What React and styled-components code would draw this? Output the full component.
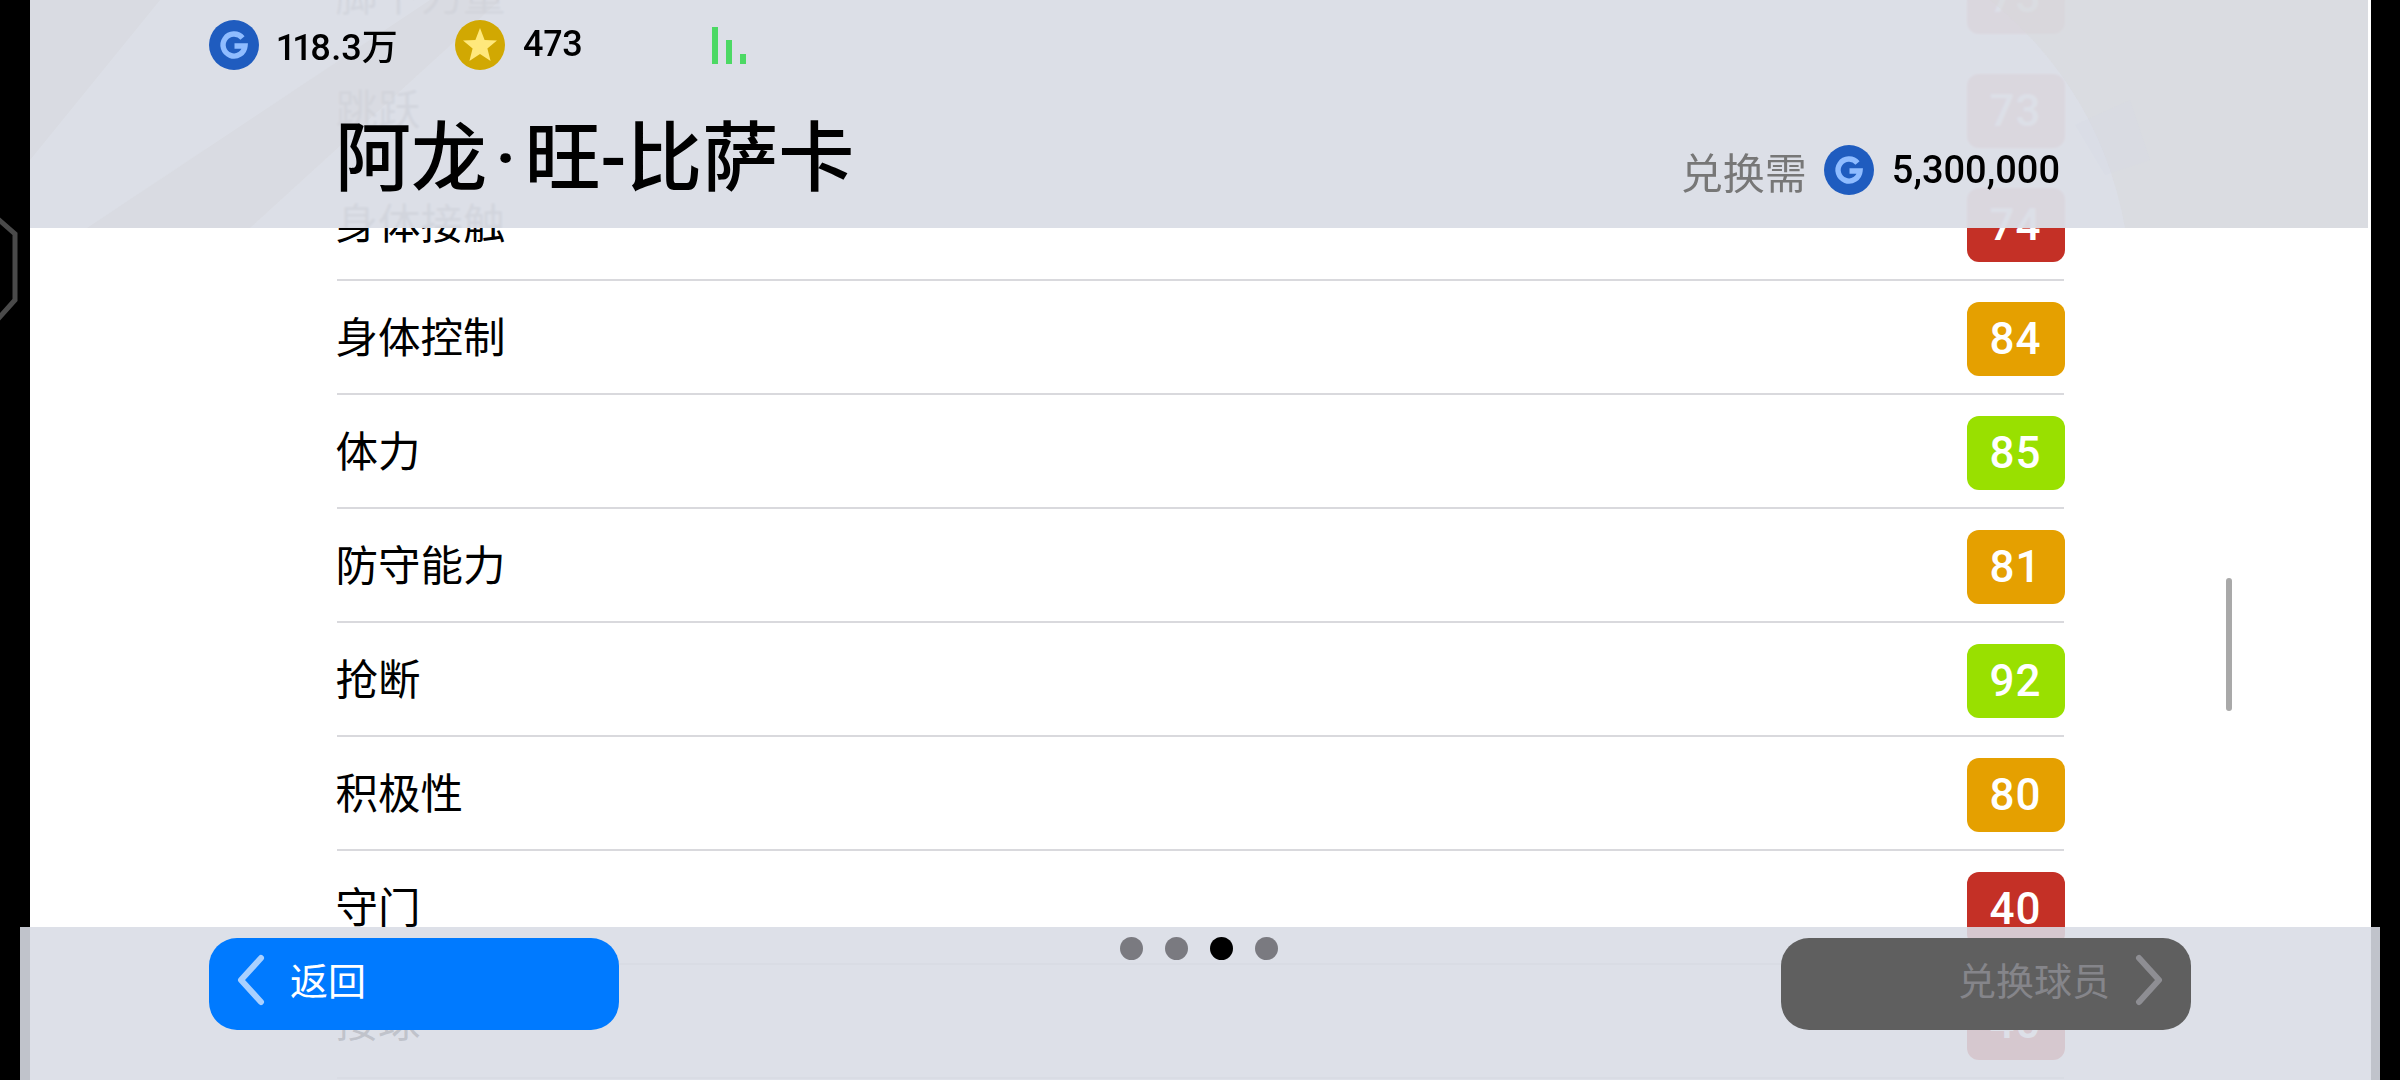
import React from 'react';
import styled, { createGlobalStyle } from 'styled-components';

const GlobalStyle = createGlobalStyle`
  html, body { margin: 0; padding: 0; background: #000; }
  body { font-family: "Noto Sans CJK SC", "Noto Sans", sans-serif; }
`;

const RED = '#c43026';
const ORANGE = '#e5a000';
const GREEN = '#99e000';

const stats = [
  { name: '脚下力量', value: 73, color: RED },
  { name: '跳跃', value: 73, color: RED },
  { name: '身体接触', value: 74, color: RED },
  { name: '身体控制', value: 84, color: ORANGE },
  { name: '体力', value: 85, color: GREEN },
  { name: '防守能力', value: 81, color: ORANGE },
  { name: '抢断', value: 92, color: GREEN },
  { name: '积极性', value: 80, color: ORANGE },
  { name: '守门', value: 40, color: RED },
  { name: '接球', value: 40, color: RED },
];

const Stage = styled.div`
  position: relative;
  width: 2400px;
  height: 1080px;
  background: #000;
  overflow: hidden;
  display: flex;
  justify-content: center;
`;

const Sheet = styled.main`
  width: 2341px;
  height: 1080px;
  background: #fff;
  overflow: hidden;
  padding: 0 307px;
  box-sizing: border-box;
`;

const StatList = styled.ul`
  list-style: none;
  margin: -61px 0 0;
  padding: 0;
`;

const StatRow = styled.li`
  height: 114px;
  box-sizing: border-box;
  border-bottom: 2px solid #d9d9dd;
  display: flex;
  justify-content: space-between;
  align-items: center;
`;

const StatName = styled.span`
  font-size: 42.5px;
  color: #000;
  line-height: 1;
  margin: -3px 0 0 -1px;
`;

const Badge = styled.span`
  width: 98px;
  height: 74px;
  margin: 3px -1px 0 0;
  border-radius: 12px;
  background: ${p => p.$color};
  color: #fff;
  font-family: Roboto, sans-serif;
  font-weight: 500;
  font-size: 44px;
  font-stretch: 96%;
  letter-spacing: 1px;
  display: flex;
  align-items: center;
  justify-content: center;
`;

const ScrollThumb = styled.div`
  position: absolute;
  left: 2226px;
  top: 578px;
  width: 6px;
  height: 133px;
  border-radius: 3px;
  background: #a9a9a9;
`;

const SideNotch = styled.svg`
  position: absolute;
  left: 0;
  top: 210px;
`;

const TopBar = styled.header`
  position: absolute;
  left: 30px;
  top: 0;
  width: 2338px;
  height: 228px;
  background: rgba(219, 222, 230, 0.96);
  backdrop-filter: blur(1px);
  overflow: hidden;
`;

const BarArt = styled.svg`
  position: absolute;
  left: 0;
  top: 0;
`;

const TopContent = styled.div`
  position: relative;
  height: 100%;
  display: flex;
  flex-direction: column;
`;

const Wallet = styled.div`
  display: flex;
  align-items: center;
  height: 50px;
  margin: 20px 0 0 179px;
`;

const Amount = styled.span`
  font-family: Roboto, "Noto Sans CJK SC", sans-serif;
  font-weight: 500;
  font-size: 36px;
  font-stretch: 92%;
  font-variant-numeric: proportional-nums;
  color: #000;
  margin: -2px 0 0 18px;
  width: ${p => p.$width}px;
`;

const Signal = styled.div`
  display: flex;
  align-items: flex-end;
  gap: 8px;
  height: 37px;
`;

const SignalBar = styled.i`
  display: block;
  width: 6px;
  height: ${p => p.$h}px;
  background: #4cd964;
`;

const TitleRow = styled.div`
  display: flex;
  justify-content: space-between;
  align-items: center;
  height: 92px;
  margin: 37px 308px 0 307px;
`;

const Title = styled.h1`
  margin: 12px 0 0 -2px;
  font-family: Roboto, "Noto Sans CJK SC", sans-serif;
  font-size: 76px;
  font-weight: 500;
  line-height: 92px;
  color: #000;
`;

const TitleDot = styled.span`
  padding: 0 8px;
`;

const Price = styled.div`
  display: flex;
  align-items: center;
  margin-top: 34px;
`;

const PriceLabel = styled.span`
  font-size: 42px;
  color: #777;
  margin-right: 17px;
`;

const PriceValue = styled.span`
  font-family: Roboto, sans-serif;
  font-weight: 500;
  font-size: 38px;
  font-stretch: 96%;
  color: #000;
  margin-left: 18px;
`;

const BottomBar = styled.footer`
  position: absolute;
  left: 20px;
  top: 927px;
  width: 2360px;
  height: 153px;
  background: rgba(217, 220, 229, 0.885);
  box-sizing: border-box;
  padding: 11px 189px 0;
  display: flex;
  justify-content: space-between;
  align-items: flex-start;
`;

const NavButton = styled.button`
  width: 410px;
  height: 92px;
  border: none;
  border-radius: 28px;
  background: ${p => (p.$disabled ? '#5f5f5f' : '#007aff')};
  color: ${p => (p.$disabled ? '#85858a' : '#fff')};
  font-family: "Noto Sans CJK SC", sans-serif;
  font-size: 38px;
  padding: 0 28px;
  display: flex;
  align-items: center;
  justify-content: ${p => (p.$disabled ? 'flex-end' : 'flex-start')};
  gap: 25px;
  span { margin-top: -11px; }
  svg { margin-top: -8px; }
`;

const Dots = styled.div`
  display: flex;
  gap: 22px;
  margin: -1px 0 0 -3px;
`;

const Dot = styled.i`
  display: block;
  width: 23px;
  height: 23px;
  border-radius: 50%;
  background: ${p => (p.$active ? '#000' : '#7a7a80')};
`;

const GCoin = () => (
  <svg width="50" height="50" viewBox="0 0 50 50">
    <circle cx="25" cy="25" r="25" fill="#1f5cbf" />
    <path d="M33.5 18A11 11 0 1 0 36 26H25.5" fill="none" stroke="#8fbcff" strokeWidth="5.4" />
  </svg>
);

const StarCoin = () => (
  <svg width="50" height="50" viewBox="0 0 50 50">
    <circle cx="25" cy="25" r="25" fill="#d1a802" />
    <polygon points="25,8 29.6,20 42,20.6 32.4,28.6 35.6,41 25,34 14.4,41 17.6,28.6 8,20.6 20.4,20" fill="#ffe87c" />
  </svg>
);

const Chevron = ({ dir, color }) => (
  <svg width="28" height="52" viewBox="0 0 28 52">
    <path
      d={dir === 'left' ? 'M24 4L4 26L24 48' : 'M4 4L24 26L4 48'}
      fill="none"
      stroke={color}
      strokeWidth="6"
      strokeLinecap="round"
      strokeLinejoin="round"
    />
  </svg>
);

const App = () => (
  <Stage>
    <GlobalStyle />
    <Sheet>
      <StatList>
        {stats.map(s => (
          <StatRow key={s.name}>
            <StatName>{s.name}</StatName>
            <Badge $color={s.color}>{s.value}</Badge>
          </StatRow>
        ))}
      </StatList>
    </Sheet>

    <ScrollThumb />

    <SideNotch width="20" height="120" viewBox="0 0 20 120">
      <path d="M-2 9L15 24V90L-2 109" fill="none" stroke="#4a4a4a" strokeWidth="5" />
    </SideNotch>

    <TopBar>
      <BarArt width="2338" height="228" viewBox="0 0 2338 228">
        <polygon points="0,0 130,0 0,160" fill="#d3d3d6" opacity="0.35" />
        <polygon points="57,228 220,228 470,0 400,0" fill="#d3d3d6" opacity="0.35" />
        <path d="M1960 0Q2070 90 2095 228H2338V0Z" fill="#d6d6da" opacity="0.4" />
        <polygon points="2045,125 2100,100 2120,160 2075,175" fill="#d2d6e2" opacity="0.25" />
      </BarArt>
      <TopContent>
        <Wallet>
          <GCoin />
          <Amount $width={178}>118.3万</Amount>
          <StarCoin />
          <Amount $width={189}>473</Amount>
          <Signal>
            <SignalBar $h={37} />
            <SignalBar $h={24} />
            <SignalBar $h={10} />
          </Signal>
        </Wallet>
        <TitleRow>
          <Title>阿龙<TitleDot>·</TitleDot>旺-比萨卡</Title>
          <Price>
            <PriceLabel>兑换需</PriceLabel>
            <GCoin />
            <PriceValue>5,300,000</PriceValue>
          </Price>
        </TitleRow>
      </TopContent>
    </TopBar>

    <BottomBar>
      <NavButton>
        <Chevron dir="left" color="#a9d0ff" />
        <span>返回</span>
      </NavButton>
      <Dots>
        <Dot />
        <Dot />
        <Dot $active />
        <Dot />
      </Dots>
      <NavButton $disabled>
        <span>兑换球员</span>
        <Chevron dir="right" color="#8e8e93" />
      </NavButton>
    </BottomBar>
  </Stage>
);

export default App;
